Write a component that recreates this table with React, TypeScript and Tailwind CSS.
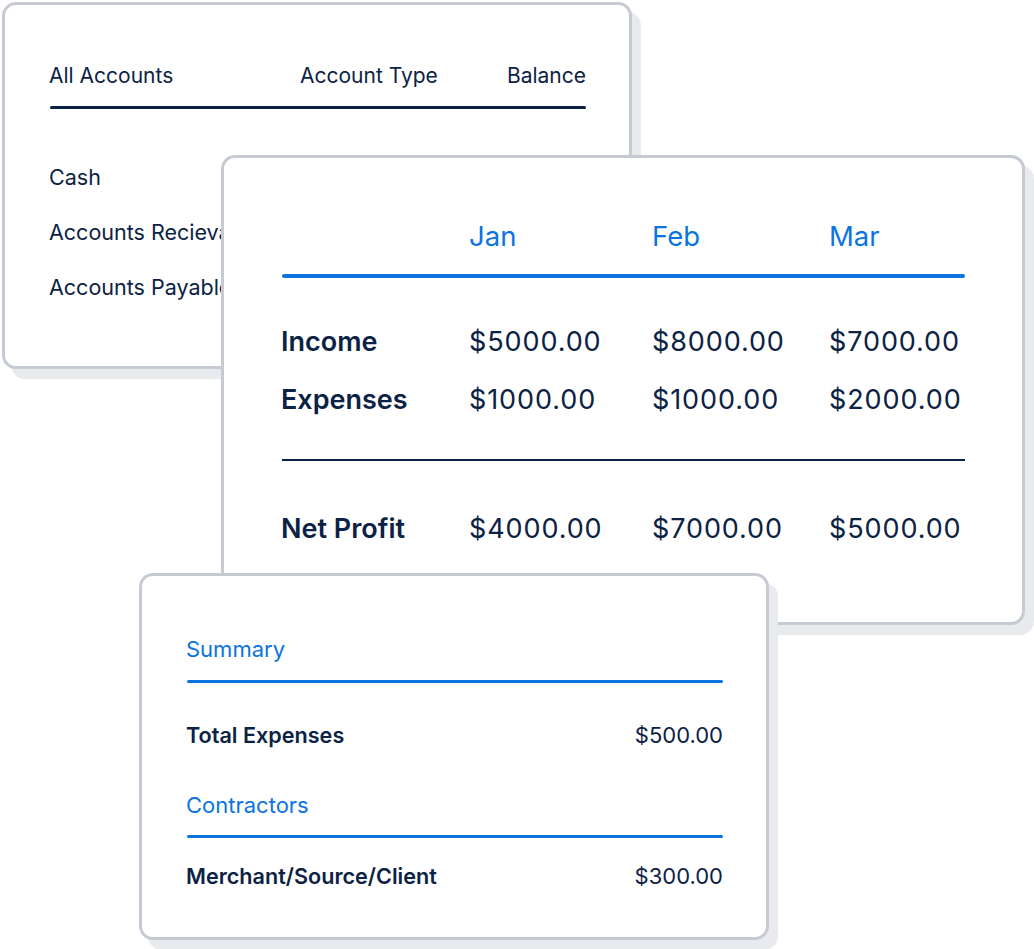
const navy = 'text-[#0c2244]';

function Card({ className, children }: { className: string; children: React.ReactNode }) {
    return (
        <div className={`absolute bg-white border-[3px] border-[#c6cbd3] rounded-[14px] shadow-[9px_10px_0_#e9eaee] ${className}`}>
            {children}
        </div>
    );
}

export default function App() {
    return (
        <div className="relative w-[1034px] h-[949px] bg-white overflow-hidden font-['Inter',sans-serif]">

            {/* Accounts card */}
            <Card className="left-[2px] top-[2px] w-[630px] h-[367px] pl-[45px] pr-[43px] pt-[58px]">
                <div className={`grid grid-cols-[251px_1fr_auto] text-[21px] leading-[26px] -ml-px ${navy}`}>
                    <span>All Accounts</span>
                    <span>Account Type</span>
                    <span>Balance</span>
                </div>
                <div className="mt-[17px] h-[3px] rounded-full bg-[#0c2244]" />
                <div className={`mt-[55px] -ml-px flex flex-col gap-[29px] text-[21.5px] leading-[26px] ${navy}`}>
                    <span>Cash</span>
                    <span className="whitespace-nowrap">Accounts Recievable</span>
                    <span className="whitespace-nowrap">Accounts Payable</span>
                </div>
            </Card>

            {/* Profit & loss card */}
            <Card className="left-[221px] top-[155px] w-[804px] h-[470px] pl-[58px] pr-[57px] pt-[62px]">
                <div className="-ml-px grid grid-cols-[188px_183px_177px_1fr] text-[27.5px] leading-[32px] text-[#0b74e0]">
                    <span />
                    <span>Jan</span>
                    <span>Feb</span>
                    <span>Mar</span>
                </div>
                <div className="mt-[22px] h-[4px] rounded-full bg-[#0b74e0]" />
                <div className={`-ml-px mt-[48px] grid grid-cols-[188px_183px_177px_1fr] gap-y-[26px] text-[27px] leading-[32px] ${navy}`}>
                    <span className="font-semibold">Income</span>
                    <span className="tracking-[0.9px]">$5000.00</span>
                    <span className="tracking-[0.9px]">$8000.00</span>
                    <span className="tracking-[0.9px]">$7000.00</span>
                    <span className="font-semibold">Expenses</span>
                    <span className="tracking-[0.9px]">$1000.00</span>
                    <span className="tracking-[0.9px]">$1000.00</span>
                    <span className="tracking-[0.9px]">$2000.00</span>
                </div>
                <div className="mt-[43px] h-[2px] bg-[#0c2244]" />
                <div className={`-ml-px mt-[52px] grid grid-cols-[188px_183px_177px_1fr] text-[27px] leading-[32px] ${navy}`}>
                    <span className="font-semibold">Net Profit</span>
                    <span className="tracking-[0.9px]">$4000.00</span>
                    <span className="tracking-[0.9px]">$7000.00</span>
                    <span className="tracking-[0.9px]">$5000.00</span>
                </div>
            </Card>

            {/* Summary card */}
            <Card className="left-[139px] top-[573px] w-[630px] h-[367px] pl-[45px] pr-[43px] pt-[60px]">
                <div className="-ml-px text-[22px] leading-[26px] text-[#0b74e0]">Summary</div>
                <div className="mt-[18px] h-[3px] rounded-full bg-[#0b74e0]" />
                <div className={`-ml-px mt-[39px] flex justify-between text-[21.6px] leading-[26px] ${navy}`}>
                    <span className="font-semibold">Total Expenses</span>
                    <span className="text-[22px]">$500.00</span>
                </div>
                <div className="-ml-px mt-[44px] text-[22px] leading-[26px] text-[#0b74e0]">Contractors</div>
                <div className="mt-[17px] h-[3px] rounded-full bg-[#0b74e0]" />
                <div className={`-ml-px mt-[25px] flex justify-between text-[21.6px] leading-[26px] ${navy}`}>
                    <span className="font-semibold">Merchant/Source/Client</span>
                    <span className="text-[22px]">$300.00</span>
                </div>
            </Card>
        </div>
    );
}
